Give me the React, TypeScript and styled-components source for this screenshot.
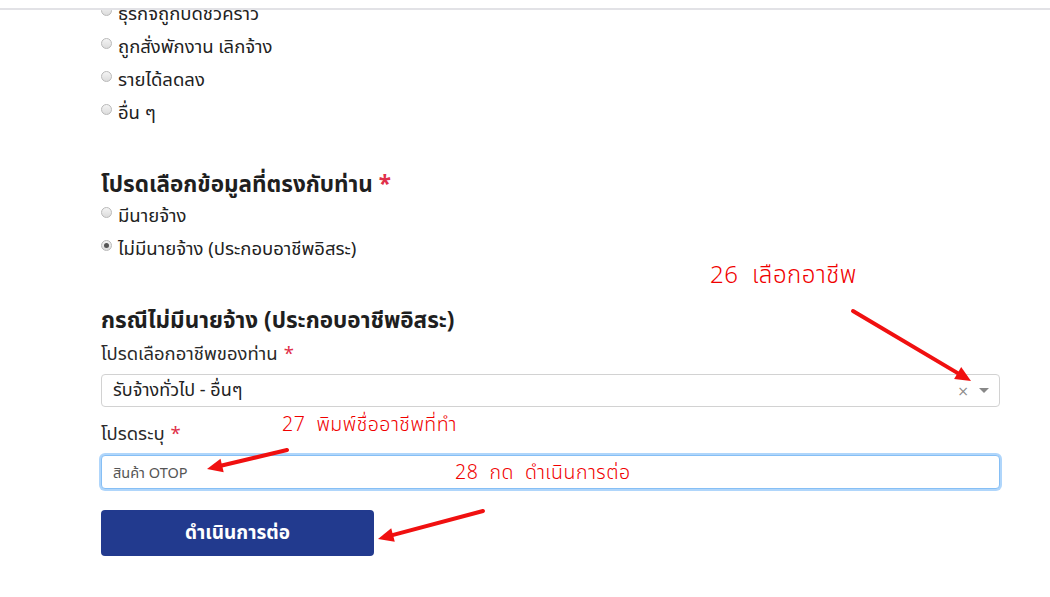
import React from 'react';
import styled, { createGlobalStyle } from 'styled-components';

const GlobalStyle = createGlobalStyle`
  html, body {
    margin: 0;
    padding: 0;
    background: #fff;
    overflow: hidden;
  }
  body {
    font-family: Tahoma, "Noto Sans", "Noto Sans Thai", "DejaVu Sans", sans-serif;
    color: #222;
  }
`;

const TopBar = styled.div`
  position: fixed;
  top: 0;
  left: 0;
  right: 0;
  height: 8px;
  background: #fff;
  border-bottom: 2px solid #e2e2e6;
  z-index: 5;
`;

const Page = styled.div`
  position: relative;
  width: 1050px;
  height: 597px;
  overflow: hidden;
`;

const Form = styled.div`
  display: flex;
  flex-direction: column;
  width: 899px;
  padding-left: 101px;
  margin-top: -3px;
`;

const RadioList = styled.div`
  display: flex;
  flex-direction: column;
`;

const RadioRow = styled.label`
  display: flex;
  align-items: center;
  height: 33px;
  font-size: 18.5px;
  color: #222;
`;

const RadioDot = styled.span<{ checked?: boolean }>`
  position: relative;
  width: 11px;
  height: 11px;
  margin-right: 6px;
  margin-top: -6px;
  border-radius: 50%;
  border: 1px solid #b9b9b9;
  background: linear-gradient(#f4f4f4, #dcdcdc);
  box-sizing: border-box;

  &::after {
    content: '';
    display: ${(p) => (p.checked ? 'block' : 'none')};
    position: absolute;
    left: 2px;
    top: 2px;
    width: 5px;
    height: 5px;
    border-radius: 50%;
    background: #555;
  }
`;

const SectionTitle = styled.h3<{ gap: number }>`
  margin: ${(p) => p.gap}px 0 0;
  font-size: 22.5px;
  line-height: 30px;
  font-weight: bold;
  color: #1f1f1f;
`;

const Required = styled.span`
  color: #e0304a;
  margin-left: 6px;
`;

const FieldLabel = styled.div<{ gap: number }>`
  margin-top: ${(p) => p.gap}px;
  font-size: 18.5px;
  line-height: 24px;
  color: #2a2a2a;
`;

const SelectBox = styled.div`
  margin-top: 9px;
  height: 33px;
  box-sizing: border-box;
  border: 1px solid #d2d2d2;
  border-radius: 4px;
  display: flex;
  align-items: center;
  padding: 0 10px 0 11px;
  font-size: 18px;
  color: #222;
`;

const SelectValue = styled.span`
  flex: 1;
`;

const ClearMark = styled.span`
  color: #8a8a8a;
  font-size: 14px;
  font-family: "DejaVu Sans", sans-serif;
  margin-right: 10px;
`;

const Caret = styled.span`
  width: 0;
  height: 0;
  border-left: 5px solid transparent;
  border-right: 5px solid transparent;
  border-top: 5px solid #888;
`;

const TextInput = styled.input`
  margin-top: 10px;
  height: 34px;
  box-sizing: border-box;
  border: 1px solid #86bff5;
  border-radius: 4px;
  box-shadow: 0 0 0 2px rgba(150, 200, 250, 0.75);
  padding: 0 11px;
  font-family: inherit;
  font-size: 14.5px;
  color: #555;
  outline: none;

  &::placeholder {
    color: #555;
  }
`;

const SubmitButton = styled.button`
  margin-top: 21px;
  width: 273px;
  height: 46px;
  border: none;
  border-radius: 4px;
  background: #223a8e;
  color: #fff;
  font-family: inherit;
  font-size: 19px;
  font-weight: bold;
`;

const Note = styled.div<{ size: number }>`
  position: absolute;
  color: #f00000;
  font-size: ${(p) => p.size}px;
  white-space: pre;
  font-family: "Noto Sans Thai", "Noto Sans", "Liberation Sans Narrow", sans-serif;
  font-weight: 300;
  letter-spacing: 0.5px;
  line-height: 1;
`;

const Arrows = styled.svg`
  position: absolute;
  left: 0;
  top: 0;
  pointer-events: none;
`;

const arrows = [
  { x1: 853, y1: 311, x2: 971, y2: 381 },
  { x1: 287, y1: 450, x2: 207, y2: 469 },
  { x1: 483, y1: 511, x2: 378, y2: 539 },
];

function Arrow({ x1, y1, x2, y2 }: { x1: number; y1: number; x2: number; y2: number }) {
  const a = Math.atan2(y2 - y1, x2 - x1);
  const len = 17;
  const w = 0.42;
  const p1 = [x2 - len * Math.cos(a - w), y2 - len * Math.sin(a - w)];
  const p2 = [x2 - len * Math.cos(a + w), y2 - len * Math.sin(a + w)];
  const bx = x2 - 12 * Math.cos(a);
  const by = y2 - 12 * Math.sin(a);
  return (
    <g>
      <line x1={x1} y1={y1} x2={bx} y2={by} stroke="#f01010" strokeWidth={4} strokeLinecap="round" />
      <polygon points={`${x2},${y2} ${p1[0]},${p1[1]} ${p2[0]},${p2[1]}`} fill="#f01010" />
    </g>
  );
}

export default function App() {
  return (
    <Page>
      <GlobalStyle />
      <TopBar />
      <Form>
        <RadioList>
          <RadioRow><RadioDot />ธุรกิจถูกปิดชั่วคราว</RadioRow>
          <RadioRow><RadioDot />ถูกสั่งพักงาน เลิกจ้าง</RadioRow>
          <RadioRow><RadioDot />รายได้ลดลง</RadioRow>
          <RadioRow><RadioDot />อื่น ๆ</RadioRow>
        </RadioList>

        <SectionTitle gap={40}>
          โปรดเลือกข้อมูลที่ตรงกับท่าน<Required>*</Required>
        </SectionTitle>
        <RadioList>
          <RadioRow><RadioDot />มีนายจ้าง</RadioRow>
          <RadioRow><RadioDot checked />ไม่มีนายจ้าง (ประกอบอาชีพอิสระ)</RadioRow>
        </RadioList>

        <SectionTitle gap={40}>กรณีไม่มีนายจ้าง (ประกอบอาชีพอิสระ)</SectionTitle>
        <FieldLabel gap={6}>
          โปรดเลือกอาชีพของท่าน<Required>*</Required>
        </FieldLabel>
        <SelectBox>
          <SelectValue>รับจ้างทั่วไป - อื่นๆ</SelectValue>
          <ClearMark>×</ClearMark>
          <Caret />
        </SelectBox>

        <FieldLabel gap={14}>
          โปรดระบุ<Required>*</Required>
        </FieldLabel>
        <TextInput placeholder="สินค้า OTOP" />

        <SubmitButton>ดำเนินการต่อ</SubmitButton>
      </Form>

      <Note size={24} style={{ left: 710, top: 264 }}>26  เลือกอาชีพ</Note>
      <Note size={19.5} style={{ left: 282, top: 416 }}>27  พิมพ์ชื่ออาชีพที่ทำ</Note>
      <Note size={19.5} style={{ left: 455, top: 464 }}>28  กด  ดำเนินการต่อ</Note>

      <Arrows width={1050} height={597}>
        {arrows.map((a, i) => (
          <Arrow key={i} {...a} />
        ))}
      </Arrows>
    </Page>
  );
}
